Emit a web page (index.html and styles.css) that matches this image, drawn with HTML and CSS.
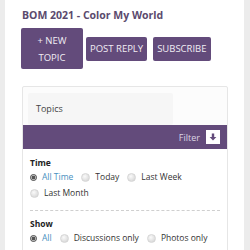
FILE: index.html
```html
<!doctype html>
<html lang="en">
<head>
  <meta charset="UTF-8">
  <title>BOM 2021 - Color My World</title>
  <link rel="stylesheet" href="styles.css">
</head>
<body>
  <div class="page">
    <h1 class="title">BOM 2021 - Color My World</h1>
    <div class="actions">
      <button class="btn btn-big">+ NEW<br>TOPIC</button>
      <button class="btn">POST REPLY</button>
      <button class="btn">SUBSCRIBE</button>
    </div>
    <div class="card">
      <div class="card-top">
        <div class="topics">Topics</div>
      </div>
      <div class="filter-bar">
        <span>Filter</span>
        <span class="filter-icon">
          <svg width="8" height="8" viewBox="0 0 8 8"><path d="M2.8 0.5h2.4v3.5h2.2L4 7.6 0.6 4h2.2z" fill="#634b7b"/></svg>
        </span>
      </div>
      <div class="filters">
        <div class="group">
          <div class="group-label">Time</div>
          <div class="options">
            <label class="opt"><span class="radio on"></span><span class="active">All Time</span></label>
            <label class="opt"><span class="radio"></span>Today</label>
            <label class="opt"><span class="radio"></span>Last Week</label>
            <label class="opt"><span class="radio"></span>Last Month</label>
          </div>
        </div>
        <div class="group">
          <div class="group-label">Show</div>
          <div class="options">
            <label class="opt"><span class="radio on"></span><span class="active">All</span></label>
            <label class="opt"><span class="radio"></span>Discussions only</label>
            <label class="opt"><span class="radio"></span>Photos only</label>
          </div>
        </div>
      </div>
    </div>
  </div>
</body>
</html>
```

FILE: styles.css
```css
body {
  margin: 0;
  background: #ececec;
  font-family: 'Open Sans', Arial, sans-serif;
}
.page {
  margin: 0 6px 0 5px;
  background: #fff;
  min-height: 250px;
  padding: 8px 16px 0 16px;
}
.title {
  margin: 0 0 5px 1px;
  font-size: 10.5px;
  font-weight: 700;
  color: #5b4a6d;
  line-height: 15px;
}
.actions {
  display: flex;
  align-items: center;
  gap: 3px;
  margin-bottom: 17px;
}
.btn {
  background: #634b7b;
  color: #f1edf4;
  border: none;
  border-radius: 2px;
  font-family: 'Open Sans', Arial, sans-serif;
  font-size: 9.5px;
  line-height: 13px;
  padding: 0 4px;
  height: 24px;
  white-space: nowrap;
}
.btn + .btn + .btn {
  margin-left: 3px;
}
.btn-big {
  width: 62px;
  height: 41px;
  line-height: 17px;
}
.card {
  border: 1px solid #e6e6e6;
  border-radius: 2px;
  background: #fcfcfc;
  margin-left: 1px;
}
.card-top {
  padding: 6px 54px 0 5px;
}
.topics {
  background: #f6f6f6;
  border-radius: 2px;
  height: 32px;
  padding-left: 8px;
  font-size: 9px;
  line-height: 32px;
  color: #444;
}
.filter-bar {
  background: #634b7b;
  height: 24px;
  display: flex;
  align-items: center;
  justify-content: flex-end;
  padding-right: 7px;
  gap: 6px;
  color: #ddd5e4;
  font-size: 9px;
}
.filter-icon {
  width: 14px;
  height: 14px;
  background: #fff;
  display: flex;
  align-items: center;
  justify-content: center;
}
.filters {
  padding: 0 7px;
  background: #fff;
}
.group {
  padding: 9px 0 11px 0;
}
.group + .group {
  border-top: 1px dashed #cfcfcf;
  padding-top: 8px;
}
.group-label {
  font-size: 8.5px;
  font-weight: 700;
  color: #222;
  line-height: 10px;
}
.options {
  display: flex;
  flex-wrap: wrap;
  column-gap: 8px;
  row-gap: 4px;
  margin-top: 3px;
}
.opt {
  display: flex;
  align-items: center;
  gap: 5px;
  font-size: 8.5px;
  color: #333;
  line-height: 12px;
}
.radio {
  width: 7px;
  height: 7px;
  border-radius: 50%;
  background: radial-gradient(circle at 40% 35%, #fafafa, #d0d0d0);
  border: 0.5px solid #d6d6d6;
}
.radio.on {
  background: radial-gradient(circle, #555 0 1.6px, #e0e0e0 2.2px);
  border-color: #444;
  border-width: 1.5px;
  width: 5px;
  height: 5px;
}
.active {
  color: #4a90c0;
}
```
